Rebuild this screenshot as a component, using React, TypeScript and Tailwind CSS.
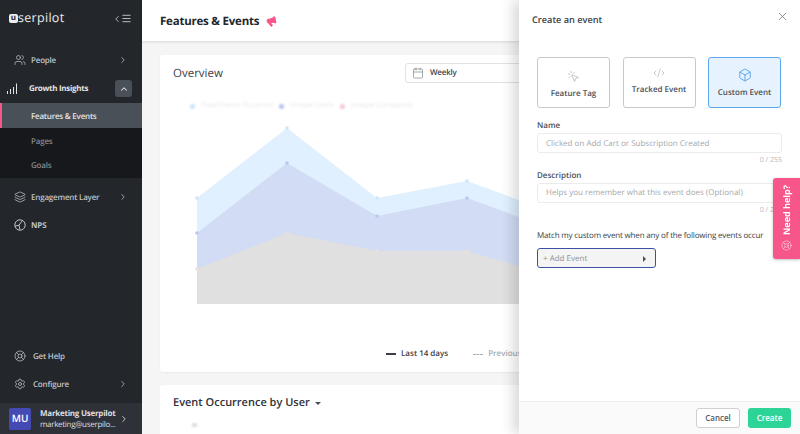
import React from "react";
import { Users, ChevronRight, ChevronUp, ChevronLeft, Menu, Layers, LifeBuoy, Settings, Calendar, X, MousePointerClick, CodeXml, Box, Megaphone } from "lucide-react";

function NavRow({ icon, label, chevron, bold, mt, pad }: { icon: React.ReactNode; label: string; chevron?: boolean; bold?: boolean; mt?: string; pad?: string }) {
  return (
    <div className={`flex h-[28px] items-center pl-[9px] pr-[14px] text-[#c0c3c7] ${mt ?? ""}`}>
      <span className="flex w-[22px] justify-center">{icon}</span>
      <span className={`flex-1 pt-[1px] text-[8px] tracking-[-0.2px] ${pad ?? ""} ${bold ? "font-bold" : "font-semibold"}`}>{label}</span>
      {chevron && <ChevronRight size={10} strokeWidth={2} className="text-[#aeb1b5]" />}
    </div>
  );
}

function TypeCard({ icon, label, active, cls }: { icon: React.ReactNode; label: string; active?: boolean; cls?: string }) {
  return (
    <div className={`flex h-[51px] w-[73px] flex-col items-center justify-center rounded-[3px] border ${active ? "border-[#5ea7ee] bg-[#e6f3fe]" : "border-[#c9c9c9] bg-white"} ${cls ?? ""}`}>
      {icon}
      <span className="mt-[5px] text-[8px] font-semibold leading-[12px] text-[#4a4f57]">{label}</span>
    </div>
  );
}

export default function App() {
  return (
    <div className="relative flex h-[434px] w-[800px] overflow-hidden bg-[#f5f5f5] font-['Open_Sans',sans-serif] [text-rendering:geometricPrecision]">
      <aside className="flex h-full w-[142px] shrink-0 flex-col bg-[#23262b]">
        <div className="flex h-[46px] items-start justify-between pl-[9px] pr-[10px] pt-[8px]">
          <div className="flex items-center text-[#eceded]">
            <span className="flex h-[9px] w-[9px] items-center justify-center rounded-[2px] bg-[#eceded] text-[8px] font-bold leading-none text-[#23262b]">u</span>
            <span className="text-[12.5px] leading-[20px] tracking-[0.3px]">serpilot</span>
          </div>
          <div className="mt-[5px] flex items-center text-[#c6c9cc]">
            <ChevronLeft size={10} strokeWidth={2} />
            <Menu size={11} strokeWidth={2} className="-ml-[1px]" />
          </div>
        </div>
        <NavRow icon={<Users size={12} strokeWidth={1.5} />} label="People" chevron />
        <div className="flex h-[29px] items-center pl-[7px] pr-[10px] text-[#e3e4e6]">
          <svg width="11" height="11" viewBox="0 0 11 11" stroke="currentColor" strokeWidth="1" className="mr-[11px] shrink-0">
            <path d="M0.5 11V8M3.5 11V6M6.5 11V4M9.5 11V0.5" />
          </svg>
          <span className="flex-1 pt-[1px] text-[8px] font-bold tracking-[-0.3px]">Growth Insights</span>
          <span className="flex h-[17px] w-[17px] items-center justify-center rounded-[3px] bg-[#4a5058]">
            <ChevronUp size={10} strokeWidth={2.5} />
          </span>
        </div>
        <div className="flex h-[25px] items-center border-l-2 border-[#f7568a] bg-[#4a5058] pl-[29px] pt-[2px] text-[8px] font-semibold tracking-[-0.22px] text-[#e3e4e6]">Features &amp; Events</div>
        <div className="flex h-[50px] flex-col bg-[#17181c] pl-[31px] pt-[2px] text-[8px] font-semibold tracking-[-0.2px] text-[#85888d]">
          <span className="flex h-[25px] items-center">Pages</span>
          <span className="flex h-[25px] items-center">Goals</span>
        </div>
        <NavRow mt="mt-[5px]" icon={<Layers size={12} strokeWidth={1.5} />} label="Engagement Layer" chevron />
        <NavRow bold icon={
          <svg width="12" height="12" viewBox="0 0 12 12" fill="none" stroke="currentColor" strokeWidth="1">
            <circle cx="6" cy="6" r="5.2" />
            <path d="M1 7.2L5 6.2L8 2M5 6.2L6 10.8" />
          </svg>
        } label="NPS" />
        <div className="mt-auto">
          <NavRow pad="pl-[2px] pt-[2px]" icon={<LifeBuoy size={12} strokeWidth={1.5} />} label="Get Help" />
          <NavRow pad="pl-[2px]" icon={<Settings size={12} strokeWidth={1.5} />} label="Configure" chevron />
        </div>
        <div className="mt-[5px] flex h-[31px] items-center bg-[#2e3238] pl-[9px] pr-[13px]">
          <span className="flex h-[22px] w-[22px] shrink-0 items-center justify-center rounded-[2px] bg-[#4449b4] text-[10px] font-semibold text-white">MU</span>
          <div className="ml-[9px] flex-1 leading-[11px] text-[#dedfe1]">
            <div className="text-[8px] font-bold tracking-[-0.25px]">Marketing Userpilot</div>
            <div className="text-[8px] tracking-[-0.3px]">marketing@userpilo...</div>
          </div>
          <ChevronRight size={10} strokeWidth={2} className="text-[#dedfe1]" />
        </div>
      </aside>

      <main className="flex h-full w-[658px] shrink-0 flex-col">
        <header className="flex h-[41px] shrink-0 items-center bg-white pl-[18px] pt-[2px] shadow-[0_1px_3px_rgba(0,0,0,0.12)]">
          <h1 className="text-[11.5px] font-bold tracking-[-0.22px] text-[#23262b]">Features &amp; Events</h1>
          <Megaphone size={11} strokeWidth={2} className="ml-[7px] -rotate-12 fill-[#f7568a] text-[#f7568a]" />
        </header>
        <div className="flex flex-col gap-[13px] pl-[18px] pr-[18px] pt-[14px]">
          <section className="flex h-[317px] flex-col rounded-[3px] bg-white pl-[13px] shadow-[0_1px_2px_rgba(0,0,0,0.05)]">
            <div className="flex h-[37px] items-start justify-between pt-[8px]">
              <h2 className="pt-[1px] text-[11.5px] font-normal leading-[20px] text-[#3a3e45]">Overview</h2>
              <div className="mr-[20px] flex h-[20px] w-[357px] items-center rounded-[3px] border border-[#e2e2e2] pl-[6px] text-[8px] font-semibold tracking-[-0.2px] text-[#3a3e45]">
                <Calendar size={12} strokeWidth={1.5} className="mr-[6px] text-[#8a8d91]" />
                Weekly
              </div>
            </div>
            <div className="relative">
              <div className="mt-[8px] flex h-[12px] items-center gap-[6px] pl-[17px] text-[7px] blur-[1.2px]">
                <span className="h-[5px] w-[5px] rounded-full bg-[#c9e3fb]" />
                <span className="text-[#e4e6ea]">Total Events Occurred</span>
                <span className="h-[5px] w-[5px] rounded-full bg-[#b6c2ec]" />
                <span className="text-[#e4e6ea]">Unique Users</span>
                <span className="h-[5px] w-[5px] rounded-full bg-[#f4c6cf]" />
                <span className="text-[#e4e6ea]">Unique Companies</span>
              </div>
              <svg width="480" height="205" viewBox="0 0 480 205" className="mt-[5px] ml-[20px] blur-[0.7px]">
                <polygon points="4,81 94,11 184,81 274,64 364,97 364,187 4,187" fill="#e0f0fe" />
                <polygon points="4,116 94,46 184,99 274,81 364,114 364,187 4,187" fill="#d2dcf4" />
                <polygon points="4,152 94,116 184,134 274,134 364,160 364,187 4,187" fill="#dfe0df" />
                <g fill="#cfe5fa"><circle cx="4" cy="81" r="1.8" /><circle cx="94" cy="11" r="1.8" /><circle cx="184" cy="81" r="1.8" /><circle cx="274" cy="64" r="1.8" /></g>
                <g fill="#bcc8ea"><circle cx="4" cy="116" r="1.8" /><circle cx="94" cy="46" r="1.8" /><circle cx="184" cy="99" r="1.8" /><circle cx="274" cy="81" r="1.8" /></g>
                <g fill="#ecdfdc"><circle cx="4" cy="152" r="1.8" /><circle cx="94" cy="116" r="1.8" /><circle cx="184" cy="134" r="1.8" /><circle cx="274" cy="134" r="1.8" /></g>
              </svg>
            </div>
            <div className="mt-[26px] flex items-center pl-[213px] text-[8px] font-semibold">
              <span className="h-[1.5px] w-[10px] bg-[#3a3e45]" />
              <span className="ml-[5px] text-[#3a3e45]">Last 14 days</span>
              <span className="ml-[25px] w-[10px] border-t border-dashed border-[#a9abae]" />
              <span className="ml-[5px] text-[#a9abae]">Previous 14 days</span>
            </div>
          </section>
          <section className="h-[80px] rounded-[3px] bg-white pl-[13px] pt-[9px]">
            <div className="flex items-center">
              <h2 className="text-[11px] font-semibold leading-[18px] text-[#2f3238]">Event Occurrence by User</h2>
              <span className="ml-[5px] h-0 w-0 border-x-[3px] border-t-[3px] border-x-transparent border-t-[#4a4f57]" />
            </div>
            <span className="mt-[11px] ml-[19px] block h-[4px] w-[5px] rounded-[1px] bg-[#dcdcdc] blur-[1px]" />
          </section>
        </div>
      </main>

      <div className="absolute inset-y-0 left-[519px] flex w-[281px] flex-col bg-white shadow-[-6px_0_12px_rgba(0,0,0,0.15)]">
        <div className="flex-1 pl-[18px] pr-[18px] pt-[13px]">
          <div className="flex items-center justify-between">
            <h3 className="-ml-[5px] text-[9.2px] font-semibold leading-[14px] text-[#3a3e45]">Create an event</h3>
            <X size={13} strokeWidth={1.2} className="-mr-[7px] -mt-[7px] text-[#55595f]" />
          </div>
          <div className="mt-[30px] flex w-[244px] justify-between">
            <TypeCard cls="pt-[5px]" icon={<MousePointerClick size={13} strokeWidth={1} className="text-[#8f9297]" />} label="Feature Tag" />
            <TypeCard cls="pb-[2px]" icon={<CodeXml size={12} strokeWidth={1} className="text-[#8f9297]" />} label="Tracked Event" />
            <TypeCard cls="pt-[1px]" active icon={<Box size={14} strokeWidth={1.5} className="text-[#4c9be8]" />} label="Custom Event" />
          </div>
          <label className="mt-[12px] block text-[8px] font-semibold leading-[12px] text-[#4a4f57]">Name</label>
          <div className="mt-[1px] flex h-[20px] w-[245px] items-center rounded-[3px] border border-[#ebebeb] pl-[8px] pt-[1px] text-[8px] text-[#a6a8ab]">Clicked on Add Cart or Subscription Created</div>
          <div className="mt-[2px] w-[245px] text-right text-[7px] leading-[11px] text-[#b5b7ba]">0 / 255</div>
          <label className="mt-[4px] block text-[8px] font-semibold leading-[12px] text-[#4a4f57]">Description</label>
          <div className="mt-[1px] flex h-[20px] w-[245px] items-center rounded-[3px] border border-[#ebebeb] pl-[8px] text-[8px] text-[#a6a8ab]">Helps you remember what this event does (Optional)</div>
          <div className="mt-[2px] w-[245px] text-right text-[7px] leading-[11px] text-[#b5b7ba]">0 / 255</div>
          <p className="mt-[14px] whitespace-nowrap text-[8px] font-medium leading-[12px] tracking-[-0.17px] text-[#3a3e45]">Match my custom event when any of the following events occur</p>
          <div className="mt-[6px] flex h-[20px] w-[119px] items-center justify-between rounded-[3px] border-[1.5px] border-[#3f4fa8] bg-[#f4f4f4] pl-[5px] pr-[9px] pt-[1px] text-[8px] text-[#8f9297]">
            + Add Event
            <span className="h-0 w-0 border-y-[3px] border-l-[3px] border-y-transparent border-l-[#4a4f57]" />
          </div>
        </div>
        <div className="flex h-[33px] items-center justify-end gap-[8px] border-t border-[#efefef] bg-[#fafafa] pr-[9px]">
          <button className="flex h-[20px] w-[44px] items-center justify-center rounded-[3px] border border-[#d0d0d0] bg-white text-[8px] font-semibold text-[#55595f]">Cancel</button>
          <button className="flex h-[20px] w-[43px] items-center justify-center rounded-[3px] bg-[#2dd498] text-[8px] font-semibold text-white">Create</button>
        </div>
      </div>

      <div className="absolute left-[773px] top-[178px] flex h-[81px] w-[27px] flex-col items-center justify-end rounded-l-[3px] bg-[#f7568a] pb-[8px] text-white shadow-[0_1px_3px_rgba(0,0,0,0.25)]">
        <span className="rotate-180 text-[9px] font-bold leading-[12px] [writing-mode:vertical-rl]">Need help?</span>
        <LifeBuoy size={11} strokeWidth={1} className="mt-[5px]" />
      </div>
    </div>
  );
}
